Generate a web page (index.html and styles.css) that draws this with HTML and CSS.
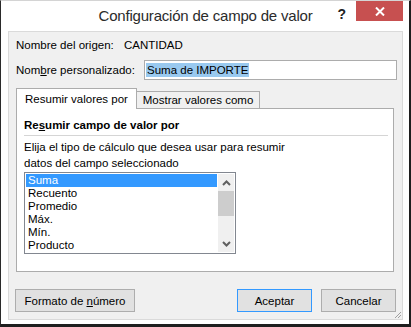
FILE: index.html
```html
<!DOCTYPE html>
<html lang="es">
<head>
  <meta charset="UTF-8" />
  <title>Configuración de campo de valor</title>
  <link rel="stylesheet" href="styles.css">
</head>
<body>
  <div class="window">
    <!-- Title bar -->
    <div class="titlebar">
      <span></span>
      <span class="title">Configuración de campo de valor</span>
      <div class="caption-buttons">
        <span class="help">?</span>
        <span class="close">
          <svg width="10" height="9" viewBox="0 0 10 9"><path d="M1 0.5 L9 8.5 M9 0.5 L1 8.5" stroke="#fff" stroke-width="2"/></svg>
        </span>
      </div>
    </div>

    <!-- Client area -->
    <div class="client">
      <div class="row source">
        <span class="label">Nombre del origen:</span>
        <span>CANTIDAD</span>
      </div>
      <div class="row custom">
        <label class="label">Nom<u>b</u>re personalizado:</label>
        <div class="input"><span class="sel">Suma de IMPORTE</span></div>
      </div>

      <div class="tabs">
        <div class="tab active">Resumir valores por</div>
        <div class="tab">Mostrar valores como</div>
      </div>
      <div class="panel">
        <div class="panel-title">Re<u>s</u>umir campo de valor por</div>
        <div class="separator"></div>
        <p class="hint">Elija el tipo de cálculo que desea usar para resumir<br>datos del campo seleccionado</p>
        <div class="listbox">
          <ul class="items">
            <li class="selected">Suma</li>
            <li>Recuento</li>
            <li>Promedio</li>
            <li>Máx.</li>
            <li>Mín.</li>
            <li>Producto</li>
          </ul>
          <div class="scrollbar">
            <div class="arrow">
              <svg width="9" height="6" viewBox="0 0 9 6"><path d="M1 5 L4.5 1.5 L8 5" fill="none" stroke="#606060" stroke-width="2"/></svg>
            </div>
            <div class="thumb"></div>
            <div class="track"></div>
            <div class="arrow">
              <svg width="9" height="6" viewBox="0 0 9 6"><path d="M1 1 L4.5 4.5 L8 1" fill="none" stroke="#606060" stroke-width="2"/></svg>
            </div>
          </div>
        </div>
      </div>

      <div class="buttons">
        <button class="btn format">Formato de <u>n</u>úmero</button>
        <span class="spacer"></span>
        <button class="btn default">Aceptar</button>
        <button class="btn">Cancelar</button>
      </div>

      <svg class="grip" width="8" height="8" viewBox="0 0 8 8">
        <path d="M7 1 L1 7 M7 4 L4 7" stroke="#a0a0a0" stroke-width="1"/>
      </svg>
    </div>
  </div>
</body>
</html>
```

FILE: styles.css
```css
/* Base */
* { box-sizing: border-box; margin: 0; padding: 0; }
body {
  background: #ffffff;
  font-family: "Liberation Sans", Arial, sans-serif;
  font-size: 11.5px;
  color: #000;
}
u { text-decoration: underline; text-underline-offset: 1px; }

/* Window frame */
.window {
  width: 411px;
  height: 327px;
  background: #ffffff;
  border-left: 1px solid #2a2a2a;
  border-right: 2px solid #1e1e1e;
  border-top: 1px solid #d4d4d4;
  border-bottom: 3px solid #1e1e1e;
  padding: 0 6px 4px 7px;
}

/* Title bar */
.titlebar {
  height: 30px;
  display: grid;
  grid-template-columns: 1fr auto 1fr;
  align-items: start;
}
.title {
  font-size: 15px;
  letter-spacing: -0.2px;
  color: #2b2b2b;
  line-height: 30px;
  white-space: nowrap;
}
.caption-buttons {
  justify-self: end;
  display: flex;
  align-items: flex-start;
}
.help {
  font-weight: bold;
  font-size: 14px;
  line-height: 14px;
  color: #222;
  margin-top: 6px;
  margin-right: 10px;
}
.close {
  width: 47px;
  height: 20px;
  background: #c75050;
  display: flex;
  align-items: center;
  justify-content: center;
}

/* Client area */
.client {
  position: relative;
  height: 289px;
  background: #f0f0f0;
  border: 1px solid #dadada;
  padding: 5px 5px 0 7px;
}
.row {
  display: flex;
  align-items: center;
}
.row .label { flex: none; }
.source { height: 16px; line-height: 16px; }
.source .label { width: 108px; }
.custom { margin-top: 7px; height: 20px; }
.custom .label { width: 128px; }
.input {
  width: 253px;
  height: 20px;
  background: #fff;
  border: 1px solid #acacac;
  padding: 2px 0 0 1px;
}
.sel {
  display: inline-block;
  background: #99c9ef;
  line-height: 14px;
  height: 14px;
  padding: 0 1px;
}

/* Tabs */
.tabs {
  display: flex;
  align-items: flex-end;
  height: 20px;
  margin-top: 8px;
}
.tab {
  border: 1px solid #acacac;
  border-bottom: none;
  text-align: center;
  background: #f0f0f0;
  height: 17px;
  line-height: 16px;
  width: 124px;
  margin-left: -1px;
}
.tab.active {
  position: relative;
  z-index: 1;
  background: #fff;
  width: 121px;
  height: 21px;
  line-height: 18px;
  margin-left: 0;
  margin-bottom: -1px;
  padding-top: 1px;
}
.panel {
  width: 378px;
  height: 164px;
  background: #fff;
  border: 1px solid #acacac;
  padding: 8px 0 0 7px;
}
.panel-title {
  font-weight: bold;
  line-height: 16px;
}
.separator {
  width: 364px;
  height: 1px;
  background: #d5d5d5;
  margin-top: 2px;
}
.hint {
  margin-top: 3px;
  line-height: 16px;
  white-space: nowrap;
}

/* List box */
.listbox {
  margin-top: 1px;
  width: 212px;
  height: 82px;
  border: 1px solid #828790;
  padding: 1px;
  display: flex;
  gap: 1px;
}
.items {
  list-style: none;
  flex: 1;
}
.items li {
  height: 13px;
  line-height: 13px;
  padding-left: 2px;
}
.items li.selected {
  background: #3399ff;
  color: #fff;
}
.scrollbar {
  width: 16px;
  background: #f0f0f0;
  display: flex;
  flex-direction: column;
}
.scrollbar .arrow {
  height: 17px;
  display: flex;
  align-items: center;
  justify-content: center;
}
.scrollbar .thumb {
  height: 25px;
  background: #cdcdcd;
}
.scrollbar .track { flex: 1; }

/* Buttons */
.buttons {
  display: flex;
  margin-top: 17px;
  margin-left: -1px;
  margin-right: 1px;
  gap: 9px;
}
.spacer { flex: 1; }
.btn {
  font: inherit;
  color: #000;
  height: 23px;
  width: 75px;
  background: #e1e1e1;
  border: 1px solid #adadad;
}
.btn.format { width: 120px; }
.btn.default { border-color: #3399ff; }

.grip {
  position: absolute;
  right: 0;
  bottom: 0;
}
```
